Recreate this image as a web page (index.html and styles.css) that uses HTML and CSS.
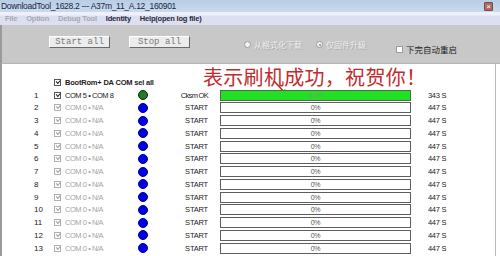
FILE: index.html
```html
<!DOCTYPE html>
<html>
<head>
<meta charset="utf-8">
<link rel="stylesheet" href="styles.css">
</head>
<body>
<div class="window">
  <div class="titlebar">
    <span class="title">DownloadTool_1628.2 --- A37m_11_A.12_160901</span>
    <span class="close">×</span>
  </div>
  <div class="menubar">
    <span class="menu dis">File</span>
    <span class="menu dis">Option</span>
    <span class="menu dis">Debug Tool</span>
    <span class="menu">Identity</span>
    <span class="menu">Help(open log file)</span>
  </div>
  <div class="toolbar">
    <div class="btns">
      <span class="btn">Start all</span>
      <span class="btn">Stop all</span>
    </div>
    <div class="radios">
      <span class="radio"><i class="rdot"></i><span class="rtext">从格式化下载</span></span>
      <span class="radio"><i class="rdot on"></i><span class="rtext">仅固件升级</span></span>
    </div>
    <label class="reboot"><i class="cb white"></i>下完自动重启</label>
  </div>
  <div class="content">
    <div class="banner">表示刷机成功，祝贺你！</div>
    <svg class="arrow" width="20" height="20" viewBox="0 0 20 20"><path d="M2 2 L14 15" stroke="#c0282a" stroke-width="1.6" fill="none"/><path d="M16 17 L9 14 L13 10 Z" fill="#c0282a"/></svg>
    <div class="row head">
      <span class="num"></span>
      <i class="cb"></i>
      <span class="label bold">BootRom+ DA COM sel all</span>
    </div>
    <div class="row">
      <span class="num">1</span><i class="cb"></i><span class="label">COM 5 • COM 8</span>
      <span class="dotcell"><i class="dot green"></i></span>
      <span class="status narrow">Cksm OK</span>
      <span class="bar done"><span class="fill" style="width:100%"></span><span class="pct">100%</span></span>
      <span class="time">343 S</span>
    </div>
    <div class="row off"><span class="num">2</span><i class="cb"></i><span class="label">COM 0 • N/A</span><span class="dotcell"><i class="dot"></i></span><span class="status">START</span><span class="bar"><span class="pct">0%</span></span><span class="time">447 S</span></div>
    <div class="row off"><span class="num">3</span><i class="cb"></i><span class="label">COM 0 • N/A</span><span class="dotcell"><i class="dot"></i></span><span class="status">START</span><span class="bar"><span class="pct">0%</span></span><span class="time">447 S</span></div>
    <div class="row off"><span class="num">4</span><i class="cb"></i><span class="label">COM 0 • N/A</span><span class="dotcell"><i class="dot"></i></span><span class="status">START</span><span class="bar"><span class="pct">0%</span></span><span class="time">447 S</span></div>
    <div class="row off"><span class="num">5</span><i class="cb"></i><span class="label">COM 0 • N/A</span><span class="dotcell"><i class="dot"></i></span><span class="status">START</span><span class="bar"><span class="pct">0%</span></span><span class="time">447 S</span></div>
    <div class="row off"><span class="num">6</span><i class="cb"></i><span class="label">COM 0 • N/A</span><span class="dotcell"><i class="dot"></i></span><span class="status">START</span><span class="bar"><span class="pct">0%</span></span><span class="time">447 S</span></div>
    <div class="row off"><span class="num">7</span><i class="cb"></i><span class="label">COM 0 • N/A</span><span class="dotcell"><i class="dot"></i></span><span class="status">START</span><span class="bar"><span class="pct">0%</span></span><span class="time">447 S</span></div>
    <div class="row off"><span class="num">8</span><i class="cb"></i><span class="label">COM 0 • N/A</span><span class="dotcell"><i class="dot"></i></span><span class="status">START</span><span class="bar"><span class="pct">0%</span></span><span class="time">447 S</span></div>
    <div class="row off"><span class="num">9</span><i class="cb"></i><span class="label">COM 0 • N/A</span><span class="dotcell"><i class="dot"></i></span><span class="status">START</span><span class="bar"><span class="pct">0%</span></span><span class="time">447 S</span></div>
    <div class="row off"><span class="num">10</span><i class="cb"></i><span class="label">COM 0 • N/A</span><span class="dotcell"><i class="dot"></i></span><span class="status">START</span><span class="bar"><span class="pct">0%</span></span><span class="time">447 S</span></div>
    <div class="row off"><span class="num">11</span><i class="cb"></i><span class="label">COM 0 • N/A</span><span class="dotcell"><i class="dot"></i></span><span class="status">START</span><span class="bar"><span class="pct">0%</span></span><span class="time">447 S</span></div>
    <div class="row off"><span class="num">12</span><i class="cb"></i><span class="label">COM 0 • N/A</span><span class="dotcell"><i class="dot"></i></span><span class="status">START</span><span class="bar"><span class="pct">0%</span></span><span class="time">447 S</span></div>
    <div class="row off"><span class="num">13</span><i class="cb"></i><span class="label">COM 0 • N/A</span><span class="dotcell"><i class="dot"></i></span><span class="status">START</span><span class="bar"><span class="pct">0%</span></span><span class="time">447 S</span></div>
  </div>
</div>
</body>
</html>
```

FILE: styles.css
```css
html, body {
  margin: 0;
  padding: 0;
  width: 500px;
  height: 256px;
  overflow: hidden;
  background: #ffffff;
  font-family: "Liberation Sans", Arial, "Noto Sans CJK SC", sans-serif;
}
.window {
  width: 500px;
  height: 256px;
  display: flex;
  flex-direction: column;
}
.titlebar {
  height: 12px;
  background: linear-gradient(#b8cde6, #c9daee);
  display: flex;
  align-items: center;
  justify-content: space-between;
  padding: 0 7px 0 1px;
}
.title {
  font-size: 8.5px;
  color: #1a2540;
  letter-spacing: -0.3px;
  white-space: nowrap;
}
.close {
  width: 9px;
  height: 9px;
  background: #b06a62;
  border: 1px solid #7a4a48;
  box-sizing: border-box;
  color: #fff;
  font-size: 8px;
  line-height: 7px;
  text-align: center;
  border-radius: 1px;
}
.menubar {
  height: 13px;
  background: linear-gradient(#eef0fa 0, #eef0fa 3px, #dcdff2 4px, #dcdff2 100%);
  display: flex;
  align-items: center;
  padding-left: 5px;
  gap: 9px;
  font-size: 7.5px;
  font-weight: bold;
  color: #26263a;
  letter-spacing: -0.2px;
}
.menu.dis {
  color: #a6a8b4;
}
.toolbar {
  height: 38px;
  background: #c8c8c8;
  border-left: 2px solid #9a9a9a;
  border-bottom: 1px solid #b4b4b4;
  position: relative;
  display: flex;
  align-items: flex-start;
}
.btns {
  display: flex;
  gap: 19px;
  margin-left: 47px;
  margin-top: 11px;
}
.btn {
  width: 61px;
  height: 12px;
  box-sizing: border-box;
  background: #ececec;
  border-top: 1px solid #ffffff;
  border-left: 1px solid #ffffff;
  border-right: 1px solid #6a6a6a;
  border-bottom: 1px solid #6a6a6a;
  font-family: "Liberation Mono", "Courier New", monospace;
  font-size: 9px;
  line-height: 10px;
  color: #7a7a7a;
  text-align: center;
}
.radios {
  display: flex;
  gap: 14px;
  margin-left: 54px;
  margin-top: 14px;
}
.radio {
  display: flex;
  align-items: center;
  gap: 3px;
}
.rdot {
  width: 7px;
  height: 7px;
  border-radius: 50%;
  background: #f4f4f4;
  border: 1px solid #9a9a9a;
  box-sizing: border-box;
  position: relative;
}
.rdot.on::after {
  content: "";
  position: absolute;
  left: 1.5px;
  top: 1.5px;
  width: 2px;
  height: 2px;
  border-radius: 50%;
  background: #8a8a8a;
}
.rtext {
  font-size: 8px;
  color: #eeeeee;
  text-shadow: 1px 1px 0 #a8a8a8;
  font-family: "Noto Sans CJK SC", sans-serif;
}
.reboot {
  display: flex;
  align-items: center;
  gap: 3px;
  margin-left: 30px;
  margin-top: 18px;
  font-family: "Noto Sans CJK SC", sans-serif;
  font-size: 8.5px;
  color: #222;
}
.cb {
  width: 7px;
  height: 7px;
  box-sizing: border-box;
  border: 1px solid #777;
  background: #fff;
  position: relative;
  display: inline-block;
  flex: none;
}
.cb.white { border-color: #9a9a9a; }
.content {
  flex: 1;
  border-left: 2px solid #9a9a9a;
  border-right: 1px solid #bcbcbc;
  margin-right: 4px;
  position: relative;
  padding-top: 12px;
  font-size: 8px;
  color: #222;
}
.banner {
  position: absolute;
  left: 201px;
  top: 1px;
  font-family: "Noto Sans CJK SC", sans-serif;
  font-size: 20px;
  line-height: 24px;
  color: #c32a2e;
  letter-spacing: 0.3px;
}
.arrow {
  position: absolute;
  left: 270px;
  top: 15px;
}
.row {
  height: 12.75px;
  display: flex;
  align-items: center;
  white-space: nowrap;
}
.num {
  width: 32px;
  padding-left: 32px;
  box-sizing: border-box;
  flex: none;
}
.row .cb {
  margin-left: 20px;
  border-color: #555;
}
.row .cb::after {
  content: "";
  position: absolute;
  left: 1px;
  top: 0px;
  width: 3px;
  height: 1.5px;
  border-left: 1px solid #222;
  border-bottom: 1px solid #222;
  transform: rotate(-45deg);
}
.label {
  margin-left: 4px;
  width: 72px;
  font-size: 7.5px;
  letter-spacing: -0.45px;
}
.label.bold { font-weight: bold; width: auto; font-size: 7.5px; letter-spacing: -0.2px; }
.off .label { color: #a4a4a4; }
.off .cb { border-color: #b0b0b0; }
.off .cb::after { border-color: #a0a0a0; }
.dotcell {
  width: 12px;
  display: flex;
  justify-content: center;
  flex: none;
}
.dot {
  width: 10px;
  height: 10px;
  border-radius: 50%;
  background: #0000e6;
  box-sizing: border-box;
  border: 1px solid #00008a;
}
.dot.green {
  background: #237a23;
  border-color: #0b2a0b;
}
.status {
  width: 59px;
  text-align: right;
  flex: none;
  font-size: 7.5px;
  letter-spacing: -0.2px;
}
.status.narrow { letter-spacing: -0.7px; }
.bar {
  margin-left: 12px;
  width: 191px;
  height: 11px;
  box-sizing: border-box;
  border: 1px solid #5e5e5e;
  background: #fff;
  position: relative;
  display: flex;
  align-items: center;
  justify-content: center;
  flex: none;
}
.bar.done { border-color: #4c6a4c; }
.fill {
  position: absolute;
  left: 0;
  top: 0;
  bottom: 0;
  background: #22e022;
}
.pct {
  position: relative;
  font-size: 7px;
  color: #555;
  letter-spacing: -0.4px;
}
.done .pct { color: #6aa86a; }
.time {
  margin-left: 17px;
  font-size: 7.5px;
  letter-spacing: -0.3px;
}
```
